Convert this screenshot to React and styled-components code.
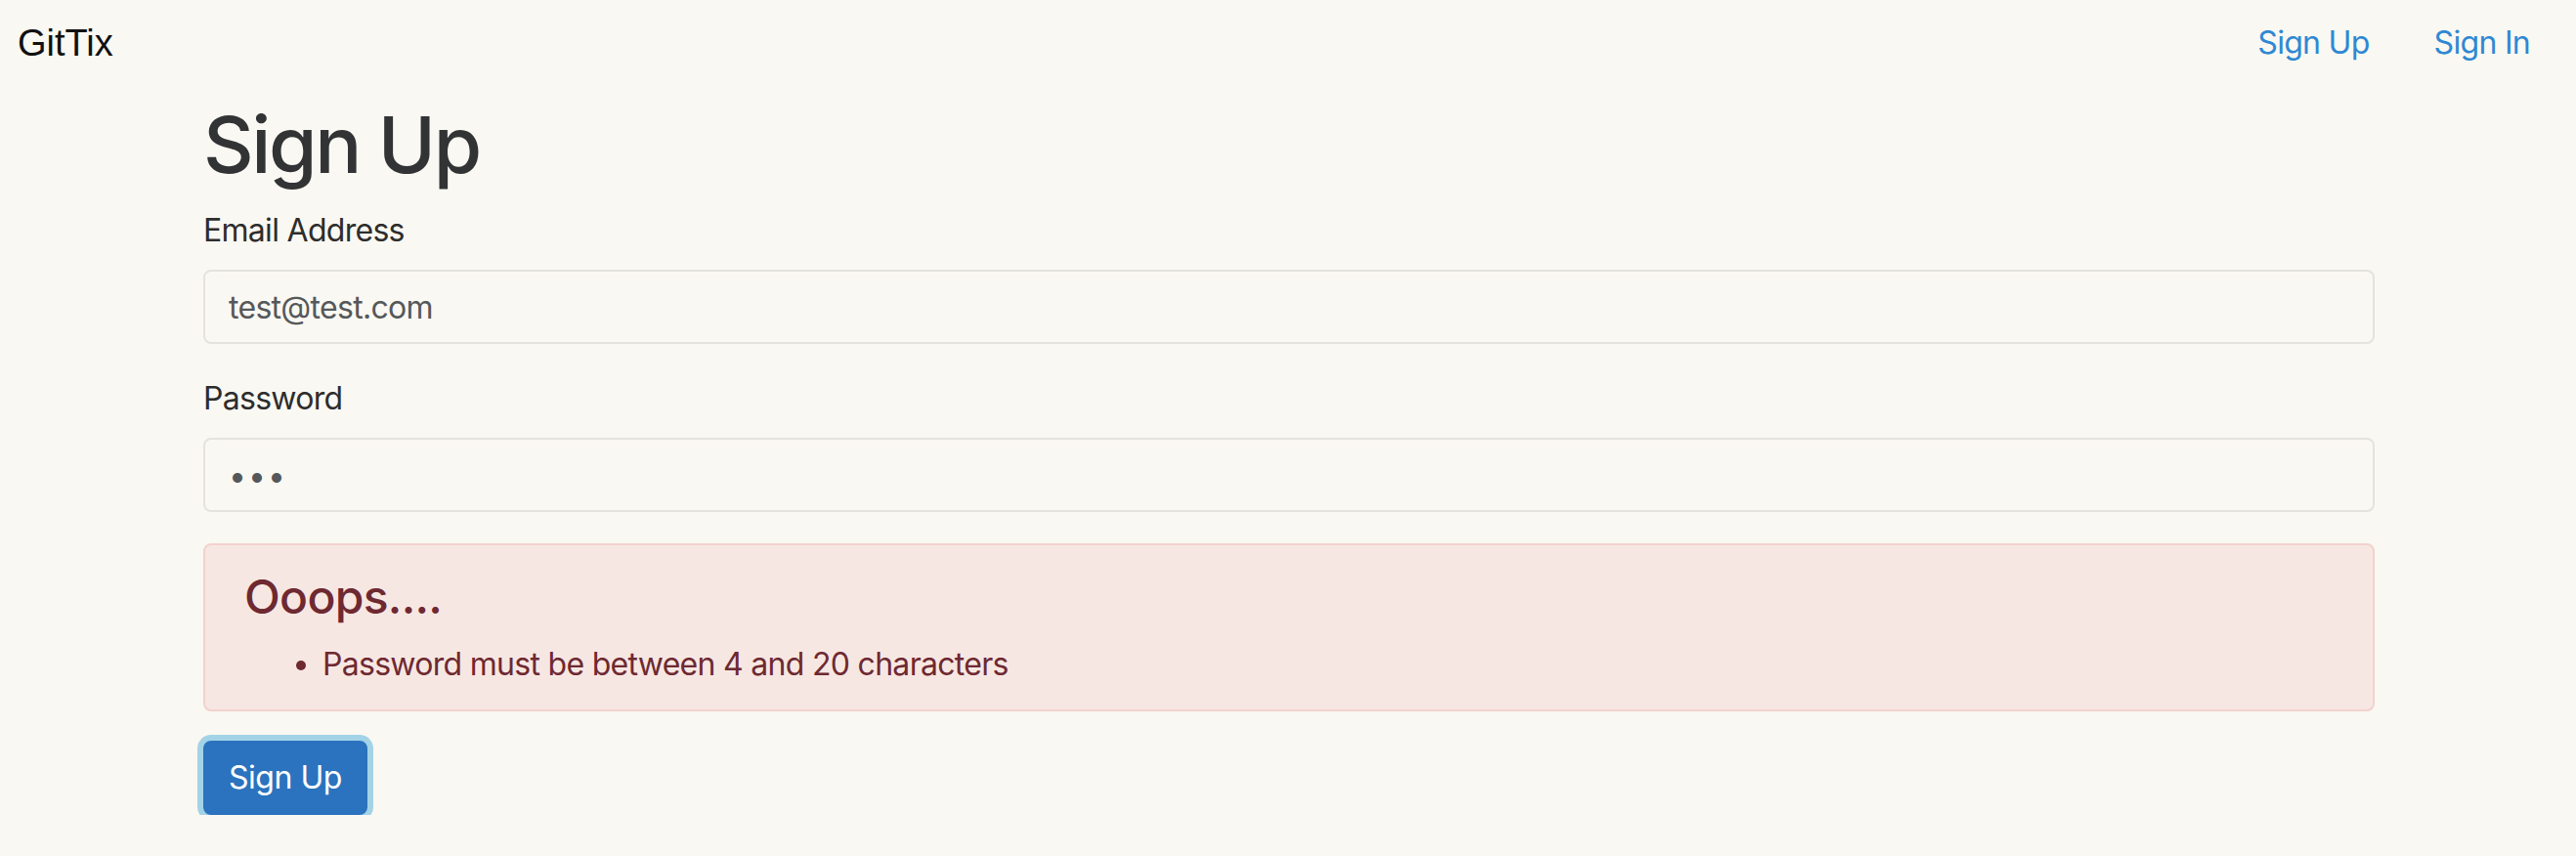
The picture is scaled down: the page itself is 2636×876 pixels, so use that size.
import styled, { createGlobalStyle } from "styled-components";

const GlobalStyle = createGlobalStyle`
  * {
    box-sizing: border-box;
  }
  body {
    margin: 0;
    background-color: #faf8f2;
    color: #333333;
    font-family: Inter, "Noto Sans", sans-serif;
    font-size: 32px;
    line-height: 1.5;
    letter-spacing: -0.022em;
  }
`;

const Nav = styled.nav`
  display: flex;
  align-items: center;
  justify-content: space-between;
  height: 88px;
  padding: 0 31px 0 18px;
`;

const Brand = styled.a`
  font-family: "Liberation Sans", Arial, sans-serif;
  font-size: 38px;
  line-height: 1;
  letter-spacing: 0;
  color: #111111;
  text-decoration: none;
`;

const NavList = styled.ul`
  display: flex;
  gap: 34px;
  margin: 0;
  padding: 0;
  list-style: none;
`;

const NavLink = styled.a`
  display: block;
  padding: 0 16px;
  color: #2f88d3;
  text-decoration: none;
`;

const Container = styled.main`
  max-width: 2282px;
  margin: 0 auto;
  padding: 0 29px 0 31px;
`;

const Title = styled.h1`
  margin: 12px 0 16px;
  font-size: 80px;
  font-weight: 500;
  line-height: 1.2;
  letter-spacing: -0.03em;
  color: #323335;
`;

const FormGroup = styled.div`
  margin-bottom: 32px;
`;

const Label = styled.label`
  display: block;
  margin-bottom: 16px;
  color: #2d2d2d;
`;

const Input = styled.input`
  display: block;
  width: 100%;
  height: 76px;
  padding: 12px 24px;
  border: 2px solid #e4e3de;
  border-radius: 8px;
  background-color: transparent;
  color: #55585b;
  font-family: inherit;
  font-size: 32px;
  line-height: 1.5;
  outline: none;
  letter-spacing: ${(p) => (p.type === "password" ? "2px" : "-0.022em")};
`;

const Alert = styled.div`
  margin-bottom: 30px;
  padding: 24px 40px 22px;
  border: 2px solid #f2d2ce;
  border-radius: 8px;
  background-color: #f7e7e3;
  color: #6e2931;
`;

const AlertHeading = styled.h4`
  margin: 0 0 16px;
  font-size: 48px;
  font-weight: 500;
  line-height: 1.2;
`;

const ErrorList = styled.ul`
  margin: 0;
  padding-left: 80px;
`;

const Button = styled.button`
  padding: 12px 24px;
  border: 2px solid #2b73be;
  border-radius: 8px;
  background-color: #2b73be;
  color: #ffffff;
  font-family: inherit;
  font-size: 32px;
  line-height: 1.5;
  letter-spacing: -0.015em;
  box-shadow: 0 0 0 6px #a3d3e7;
  cursor: pointer;
`;

export default function App() {
  const errors = ["Password must be between 4 and 20 characters"];

  return (
    <>
      <GlobalStyle />
      <Nav>
        <Brand href="#">GitTix</Brand>
        <NavList>
          <li>
            <NavLink href="#">Sign Up</NavLink>
          </li>
          <li>
            <NavLink href="#">Sign In</NavLink>
          </li>
        </NavList>
      </Nav>

      <Container>
        <form onSubmit={(e) => e.preventDefault()}>
          <Title>Sign Up</Title>
          <FormGroup>
            <Label>Email Address</Label>
            <Input type="text" defaultValue="test@test.com" />
          </FormGroup>
          <FormGroup>
            <Label>Password</Label>
            <Input type="password" defaultValue="abc" />
          </FormGroup>

          <Alert>
            <AlertHeading>Ooops....</AlertHeading>
            <ErrorList>
              {errors.map((err) => (
                <li key={err}>{err}</li>
              ))}
            </ErrorList>
          </Alert>

          <Button type="submit">Sign Up</Button>
        </form>
      </Container>
    </>
  );
}
